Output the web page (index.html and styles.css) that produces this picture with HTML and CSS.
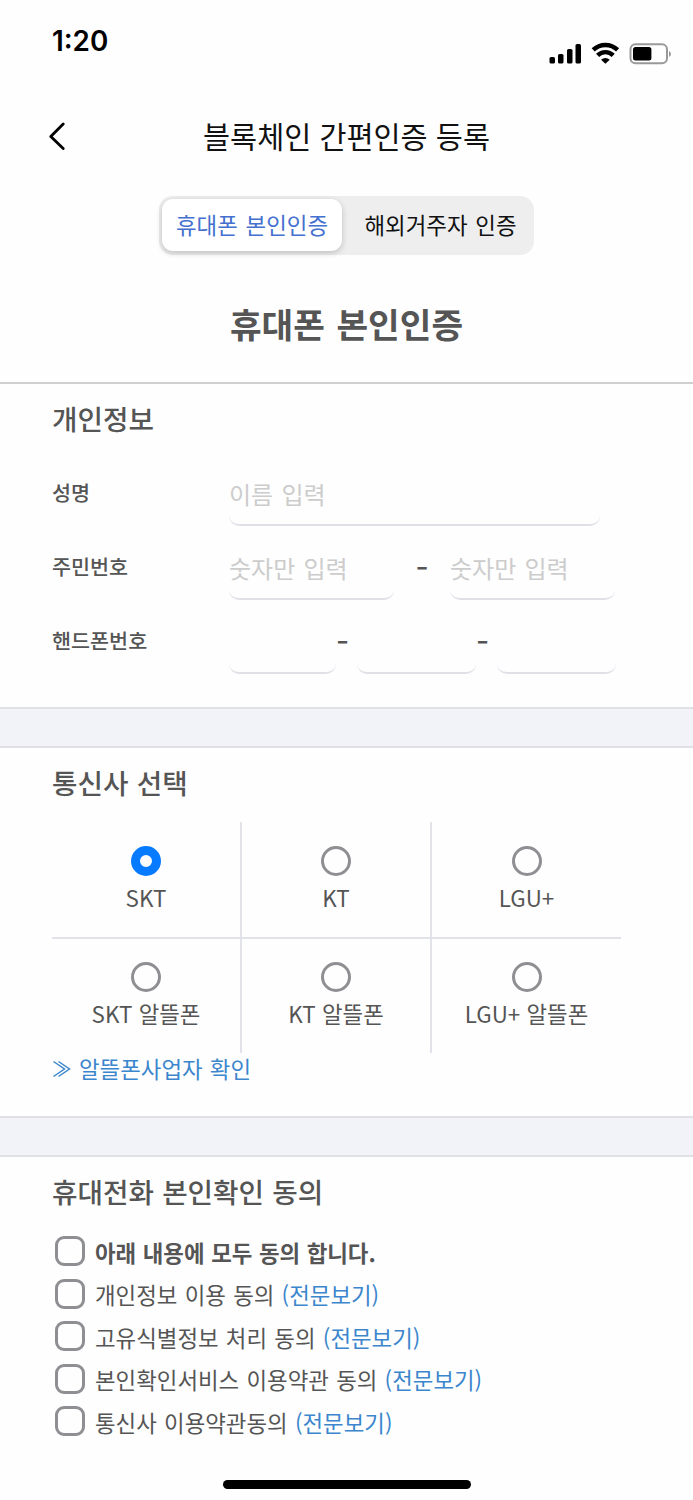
FILE: index.html
```
<!DOCTYPE html>
<html lang="ko">
<head>
    <meta charset="UTF-8" />
    <meta name="viewport" content="width=device-width, initial-scale=1.0" />
    <title>블록체인 간편인증 등록</title>
    <link rel="stylesheet" href="styles.css">
</head>
<body>
    <div class="status-bar">
        <span class="time">1:20</span>
        <svg class="status-icons" width="124" height="24" viewBox="0 0 124 24">
            <rect x="1.5" y="15" width="5.5" height="6.5" rx="1.6" />
            <rect x="10" y="12" width="5.5" height="9.5" rx="1.6" />
            <rect x="19" y="7" width="5.5" height="14.5" rx="1.6" />
            <rect x="27.5" y="2" width="5.5" height="19.5" rx="1.6" />
            <g fill="none" stroke="#000" stroke-width="4.4">
                <path d="M45.2 7.9a17.5 17.5 0 0 1 24.4 0" />
                <path d="M49.6 13.4a11 11 0 0 1 15.6 0" />
            </g>
            <path d="M57.4 21.8l-4.3-4.1a6 6 0 0 1 8.6 0z" />
            <rect x="82.5" y="2.3" width="36.5" height="19" rx="5" fill="#fff" stroke="#999" stroke-width="2" />
            <rect x="85" y="5" width="18.4" height="13.6" rx="2.5" />
            <path d="M121 9v6q2-1 2-3t-2-3z" fill="#999" />
        </svg>
    </div>

    <header class="nav-bar">
        <svg class="back" width="18" height="28" viewBox="0 0 18 28">
            <path d="M15.2 2L2.8 14.5l12.4 12" fill="none" stroke="#000" stroke-width="2.8" stroke-linecap="round" stroke-linejoin="round" />
        </svg>
        <h1>블록체인 간편인증 등록</h1>
    </header>

    <div class="tabs">
        <button type="button" class="tab active">휴대폰 본인인증</button>
        <button type="button" class="tab">해외거주자 인증</button>
    </div>

    <h2 class="page-title">휴대폰 본인인증</h2>

    <form id="authForm">
        <section class="personal">
            <h3>개인정보</h3>
            <div class="form-row">
                <label for="name">성명</label>
                <input type="text" id="name" class="name" placeholder="이름 입력" />
            </div>
            <div class="form-row">
                <label for="idFront">주민번호</label>
                <input type="text" id="idFront" class="id-number" placeholder="숫자만 입력" />
                <span class="dash wide">-</span>
                <input type="text" id="idBack" class="id-number" placeholder="숫자만 입력" />
            </div>
            <div class="form-row">
                <label for="phone1">핸드폰번호</label>
                <input type="text" id="phone1" class="phone-first" />
                <span class="dash">-</span>
                <input type="text" id="phone2" class="phone" />
                <span class="dash">-</span>
                <input type="text" id="phone3" class="phone" />
            </div>
        </section>

        <div class="divider"></div>

        <section class="carrier">
            <h3>통신사 선택</h3>
            <div class="carrier-grid">
                <label><input type="radio" name="carrier" checked /><span>SKT</span></label>
                <label><input type="radio" name="carrier" /><span>KT</span></label>
                <label><input type="radio" name="carrier" /><span>LGU+</span></label>
                <label><input type="radio" name="carrier" /><span>SKT 알뜰폰</span></label>
                <label><input type="radio" name="carrier" /><span>KT 알뜰폰</span></label>
                <label><input type="radio" name="carrier" /><span>LGU+ 알뜰폰</span></label>
            </div>
            <a class="mvno-link" href="#">
                <svg width="19" height="18" viewBox="0 0 19 18">
                    <path d="M1.5 1.5L12.5 9l-11 7.5M6.5 1.5L17.5 9l-11 7.5" fill="none" stroke="#3b86cd" stroke-width="1.5" />
                </svg>
                <span>알뜰폰사업자 확인</span>
            </a>
        </section>

        <div class="divider"></div>

        <section class="agree">
            <h3>휴대전화 본인확인 동의</h3>
            <div class="check-row all">
                <input type="checkbox" id="agreeAll" />
                <label for="agreeAll">아래 내용에 모두 동의 합니다.</label>
            </div>
            <div class="check-row">
                <input type="checkbox" id="agree1" />
                <label for="agree1">개인정보 이용 동의 <a href="#">(전문보기)</a></label>
            </div>
            <div class="check-row">
                <input type="checkbox" id="agree2" />
                <label for="agree2">고유식별정보 처리 동의 <a href="#">(전문보기)</a></label>
            </div>
            <div class="check-row">
                <input type="checkbox" id="agree3" />
                <label for="agree3">본인확인서비스 이용약관 동의 <a href="#">(전문보기)</a></label>
            </div>
            <div class="check-row">
                <input type="checkbox" id="agree4" />
                <label for="agree4">통신사 이용약관동의 <a href="#">(전문보기)</a></label>
            </div>
        </section>
    </form>

    <div class="home-indicator"></div>
</body>
</html>
```
FILE: styles.css
```
* {
    box-sizing: border-box;
}
body {
    margin: 0;
    height: 1500px;
    display: flex;
    flex-direction: column;
    overflow: hidden;
    background-color: #fefefe;
    color: #555;
    font-family: "Noto Sans CJK KR", sans-serif;
    font-size: 22.4px;
}
h1, h2, h3 {
    margin: 0;
}
a {
    color: #3b86cd;
    text-decoration: none;
}
input {
    appearance: none;
    margin: 0;
    padding: 0;
    font-family: inherit;
}

/* top bars */
.status-bar {
    height: 96px;
    padding: 24px 21px 0 52px;
    display: flex;
    justify-content: space-between;
    color: #000;
}
.time {
    font: 600 27.8px/35px Inter, sans-serif;
}
.status-icons {
    margin-top: 18px;
}
.nav-bar {
    height: 80px;
    padding: 0 48px;
    display: grid;
    grid-template-columns: 18px 1fr 18px;
    align-items: center;
    color: #111;
}
.nav-bar h1 {
    padding-bottom: 2px;
    font-size: 29.4px;
    font-weight: 400;
    line-height: 40px;
    text-align: center;
}
.tabs {
    width: 375px;
    height: 59px;
    margin: 20px 0 0 159px;
    padding: 3px;
    display: flex;
    border-radius: 14px;
    background-color: #eee;
}
.tab {
    flex: 1;
    border: none;
    border-radius: 11px;
    padding: 0 0 4px 8px;
    background: none;
    color: #111;
    font-family: inherit;
    font-size: 22.4px;
    word-spacing: 1.5px;
}
.tab.active {
    flex: 0 0 180px;
    height: 52px;
    padding: 0 0 3px;
    background-color: #fff;
    color: #4470cf;
    box-shadow: 0 2px 6px rgba(0,0,0,0.2);
}
.page-title {
    height: 129px;
    padding-top: 43px;
    border-bottom: 2px solid #d0d0d0;
    font-size: 34.4px;
    font-weight: 700;
    line-height: 50px;
    text-align: center;
    word-spacing: 2px;
}

section {
    padding: 0 52px;
}
h3 {
    font-size: 27.7px;
    font-weight: 500;
    line-height: 40px;
    word-spacing: 0.5px;
}

/* personal info */
.personal {
    height: 323px;
    padding-top: 14px;
}
.personal h3 {
    margin-bottom: 31px;
}
.form-row {
    height: 74px;
    display: flex;
    align-items: flex-start;
}
.form-row label {
    width: 177px;
    padding-top: 7px;
    font-size: 20.7px;
    font-weight: 500;
    line-height: 32px;
}
.form-row input {
    height: 57px;
    border: none;
    border-bottom: 2px solid #e0e0e8;
    border-radius: 10px;
    background: none;
    color: #555;
    font-size: 24px;
    padding-bottom: 7px;
    word-spacing: 1.5px;
}
.form-row input::placeholder {
    color: #ccc;
}
.form-row .name {
    width: 371px;
}
.form-row .id-number {
    width: 165px;
}
.form-row .phone-first {
    width: 107px;
}
.form-row .phone {
    width: 119px;
}
.dash {
    width: 21px;
    padding-right: 8px;
    display: flex;
    justify-content: center;
    font-size: 36px;
    font-weight: 400;
    line-height: 46px;
}
.dash.wide {
    width: 56px;
    padding-right: 0;
}

.divider {
    height: 41px;
    border-top: 2px solid #e0e0e5;
    border-bottom: 2px solid #e0e0e5;
    background-color: #f2f3f8;
}

/* carrier */
.carrier {
    height: 368px;
    padding-top: 14px;
}
.carrier-grid {
    width: 569px;
    margin-top: 20px;
    display: grid;
    grid-template-columns: 190px 190px 189px;
    grid-template-rows: 117px 114px;
}
.carrier-grid label {
    display: flex;
    flex-direction: column;
    align-items: center;
    padding-top: 24px;
    border-right: 2px solid #e2e2ea;
}
.carrier-grid label:nth-child(3n) {
    border-right: none;
}
.carrier-grid label:nth-child(-n+3) {
    border-bottom: 2px solid #e2e2ea;
}
.carrier-grid label:nth-child(n+4) {
    padding-top: 23px;
}
.carrier-grid span {
    margin-top: 5px;
    line-height: 32px;
}
.carrier-grid input {
    width: 30px;
    height: 30px;
    border: 3px solid #8e8e93;
    border-radius: 50%;
}
.carrier-grid input:checked {
    border: 9px solid #067bff;
}
.mvno-link {
    display: flex;
    align-items: center;
    gap: 8px;
    line-height: 30px;
    word-spacing: 1px;
}
.mvno-link span {
    padding-bottom: 2px;
}

/* agreement */
.agree {
    height: 317px;
    padding-top: 14px;
}
.agree h3 {
    margin-bottom: 19px;
}
.check-row {
    height: 42.5px;
    padding-left: 3px;
    display: flex;
    align-items: center;
}
.check-row input {
    width: 30px;
    height: 30px;
    margin-right: 10px;
    border: 3px solid #8e8e93;
    border-radius: 9px;
}
.check-row label {
    padding-top: 1px;
    line-height: 32px;
    word-spacing: 1px;
}
.check-row.all label {
    word-spacing: 0.3px;
    font-weight: 700;
}

.home-indicator {
    width: 248px;
    height: 9px;
    margin: 6px 0 0 223px;
    border-radius: 5px;
    background-color: #000;
}
```
